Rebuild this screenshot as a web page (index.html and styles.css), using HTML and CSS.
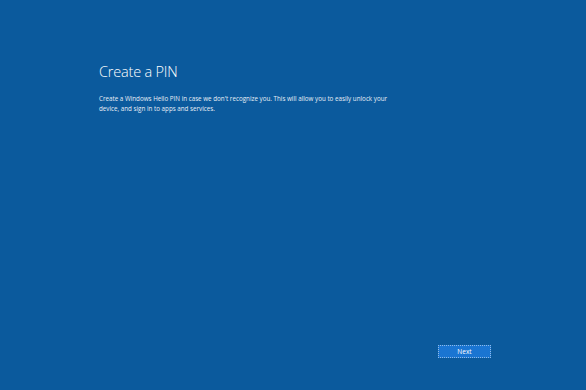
FILE: index.html
```html
<!DOCTYPE html>
<html lang="en">
<head>
  <meta charset="UTF-8">
  <title>Create a PIN</title>
  <link rel="stylesheet" href="styles.css">
</head>
<body>
  <div class="page">
    <div class="content">
      <h1>Create a PIN</h1>
      <p>Create a Windows Hello PIN in case we don't recognize you. This will allow you to easily unlock your device, and sign in to apps and services.</p>
    </div>
    <div class="footer">
      <button class="next-button">Next</button>
    </div>
  </div>
</body>
</html>
```

FILE: styles.css
```css
/* General Styles */
html, body {
  margin: 0;
  height: 100%;
}

body {
  background-color: #0b5a9d;
  font-family: "Open Sans", "Segoe UI", sans-serif;
  color: #fff;
}

.page {
  display: flex;
  flex-direction: column;
  height: 390px;
}

.content {
  flex: 1;
  padding: 62px 0 0 99px;
  width: 292px;
}

h1 {
  margin: 0 0 12px 0;
  font-size: 14.5px;
  font-weight: 300;
  line-height: 20px;
  letter-spacing: -0.2px;
}

p {
  margin: 0;
  font-size: 6.25px;
  line-height: 9.5px;
  color: #e8eef6;
}

.footer {
  display: flex;
  justify-content: flex-end;
  padding: 0 95px 32px 0;
}

.next-button {
  width: 53px;
  height: 13px;
  padding: 0;
  background-color: #1a75d2;
  color: #fff;
  border: 1px dotted #8fbbe8;
  font-family: "Open Sans", sans-serif;
  font-size: 6.5px;
  line-height: 10px;
}
```
